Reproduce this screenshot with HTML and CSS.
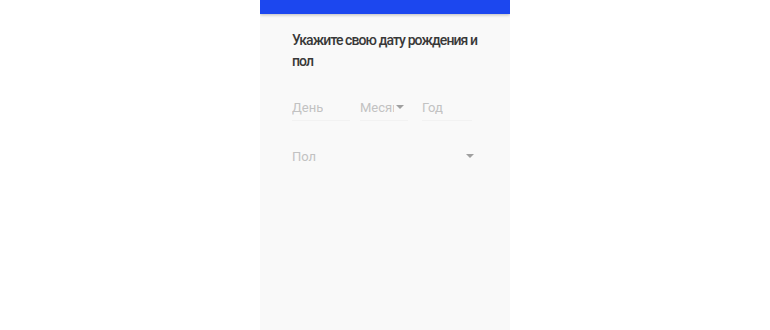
FILE: index.html
```html
<!DOCTYPE html>
<html>
<head>
  <title>Дата рождения</title>
  <meta charset="utf-8">
  <link rel="stylesheet" href="styles.css">
</head>
<body>
  <div class="screen">
    <div class="topbar"></div>

    <div class="content">
      <h1>Укажите свою дату рождения и пол</h1>

      <div class="date-row">
        <div class="field field-day">
          <span class="placeholder">День</span>
        </div>
        <div class="field field-month">
          <span class="placeholder">Месяц</span>
          <span class="caret"></span>
        </div>
        <div class="field field-year">
          <span class="placeholder">Год</span>
        </div>
      </div>

      <div class="field field-gender">
        <span class="placeholder">Пол</span>
        <span class="caret"></span>
      </div>
    </div>
  </div>
</body>
</html>
```

FILE: styles.css
```css
body {
  font-family: Roboto, "Noto Sans", sans-serif;
  margin: 0;
  background-color: #ffffff;
}

.screen {
  width: 250px;
  height: 330px;
  margin: 0 auto;
  background-color: #f9f9f9;
  overflow: hidden;
}

.topbar {
  height: 14px;
  background-color: #1c47ef;
  box-shadow: 0 1px 3px rgba(0, 0, 0, 0.25);
}

.content {
  padding: 16px 20px 0 32px;
}

h1 {
  font-size: 14px;
  font-weight: 500;
  line-height: 21px;
  letter-spacing: -0.9px;
  color: #383838;
  margin: 0;
}

.date-row {
  display: flex;
  margin-top: 22px;
}

.field {
  display: flex;
  align-items: center;
  height: 26px;
  border-bottom: 1px solid #f2f2f2;
  font-size: 13px;
  color: #c2c2c2;
}

.placeholder {
  white-space: nowrap;
  overflow: hidden;
}

.field-day {
  width: 58px;
  margin-right: 10px;
}

.field-month {
  width: 48px;
  margin-right: 14px;
}

.field-month .placeholder {
  width: 34px;
}

.field-year {
  width: 50px;
}

.caret {
  width: 0;
  height: 0;
  border-left: 4px solid transparent;
  border-right: 4px solid transparent;
  border-top: 4px solid #a0a0a0;
  margin-left: 2px;
}

.field-gender {
  margin-top: 22px;
  width: 182px;
  justify-content: space-between;
  border-bottom: none;
}
```
